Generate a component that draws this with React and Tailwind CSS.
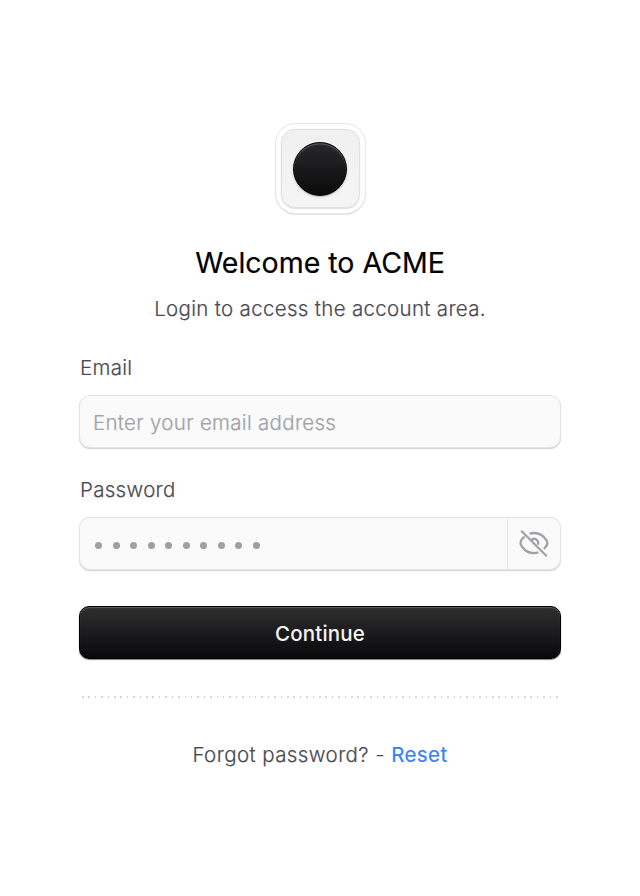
import React from "react";

const fieldBox =
  "h-[53px] w-[482px] rounded-[11px] border border-[#e4e4e7] bg-[#fafafa] shadow-[0_1px_1px_rgba(0,0,0,0.18)]";

function Logo() {
  return (
    <div className="flex size-[91px] shrink-0 items-center justify-center rounded-[21px] border border-[#e9e9e9] bg-white shadow-[0_0_1px_rgba(0,0,0,0.08),0_1px_1px_rgba(0,0,0,0.10)]">
      <div className="flex size-[79px] items-center justify-center rounded-[14px] border border-[#e0e0e0] bg-linear-to-b from-[#f0f0f0] to-[#f5f5f5] shadow-[0_0_1px_rgba(0,0,0,0.12),0_1px_1px_rgba(0,0,0,0.12)]">
        <div className="size-[54px] rounded-full border border-black bg-linear-to-b from-[#29292b] to-[#0b0b0c] shadow-[inset_0_1.5px_1px_rgba(255,255,255,0.2),0_1px_2px_rgba(0,0,0,0.25)]" />
      </div>
    </div>
  );
}

function EyeOff() {
  return (
    <svg width="32" height="30" viewBox="0 0 32 30" fill="none" stroke="#a1a1aa" strokeWidth="2.3" strokeLinecap="butt" strokeLinejoin="round">
      <path d="M3.2 1.8 28.8 27.3" />
      <path d="M6.6 7.6C4.3 9.3 2.6 11.6 2.6 14.2c0 1.4.6 2.5 1.4 3.5 2.7 3.7 6.7 6.4 12 6.4 1.6 0 3.1-.2 4.4-.8" />
      <path d="M11.6 4.6c1.4-.4 2.8-.6 4.4-.6 5.4 0 9.5 3 12.2 6.8.8 1 1.2 2.1 1.2 3.3 0 2-1.5 4.1-3.6 5.8" />
      <path d="M13.3 11.4c1.2-1.5 3.5-1.9 5.2-.8 1.6 1.1 2.1 3 1.4 5" />
    </svg>
  );
}

export default function App() {
  return (
    <main className="flex h-[896px] w-[640px] flex-col items-center bg-white pt-[123px] font-['Inter',sans-serif] text-[20.5px] leading-[26px] font-light tracking-[0.3px] text-[#4a4a50] [-webkit-text-stroke:0.2px]">
      <Logo />
      <h1 className="mt-[31px] text-[28.5px] leading-[36px] font-normal tracking-normal whitespace-nowrap text-black">Welcome to ACME</h1>
      <p className="mt-[15px] tracking-[0.32px] whitespace-nowrap">Login to access the account area.</p>

      <form className="flex w-[482px] flex-col" onSubmit={(e) => e.preventDefault()}>
        <label htmlFor="email" className="mt-[33px] ml-px">Email</label>
        <input
          id="email"
          placeholder="Enter your email address"
          className={`${fieldBox} mt-[14px] px-[13px] pt-[2px] tracking-[0.3px] outline-none placeholder:text-[#a1a1a6]`}
        />
        <span className="mt-[29px] ml-px">Password</span>
        <div className={`${fieldBox} mt-[14px] flex`}>
          <div className="flex flex-1 items-center gap-[10.55px] pt-[3px] pl-[15px]">
            {Array.from({ length: 10 }, (_, i) => (
              <span key={i} className="size-[7px] rounded-full bg-[#9f9fa3]" />
            ))}
          </div>
          <button type="button" aria-label="Show password" className="flex w-[53px] items-center justify-center border-l border-[#e4e4e7]">
            <EyeOff />
          </button>
        </div>
        <button className="mt-[36px] h-[53px] w-[482px] rounded-[10px] border border-black bg-linear-to-b from-[#303031] to-[#09090b] pt-[2px] font-medium tracking-[0.2px] text-[#f4f4f5] shadow-[inset_0_1px_1px_rgba(255,255,255,0.22),0_1px_1px_rgba(0,0,0,0.5)] [-webkit-text-stroke:0px]">
          Continue
        </button>
      </form>

      <div className="mt-[37px] flex w-[476px] justify-between">
        {Array.from({ length: 75 }, (_, i) => (
          <span key={i} className="h-[1.5px] w-[1.5px] rounded-full bg-[#c8c8cc]" />
        ))}
      </div>

      <p className="mt-[44px] tracking-[0.42px] whitespace-nowrap">
        Forgot password? - <a className="font-normal text-[#3b7ff5]">Reset</a>
      </p>
    </main>
  );
}
